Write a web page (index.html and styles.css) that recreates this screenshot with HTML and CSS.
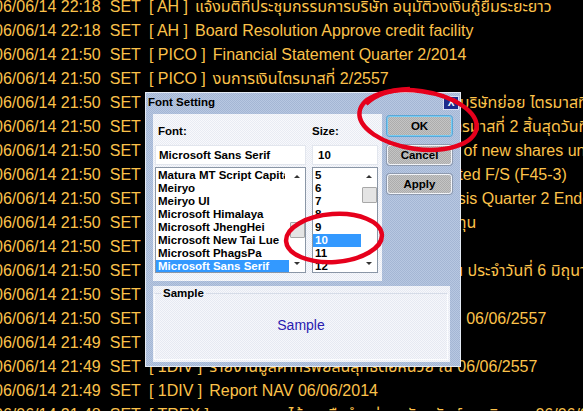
FILE: index.html
```html
<!DOCTYPE html>
<html lang="th">
<head>
  <meta charset="UTF-8">
  <title>Font Setting</title>
  <meta name="viewport" content="width=device-width, initial-scale=1.0">
  <link rel="stylesheet" href="styles.css">
</head>
<body>
<div class="news">
  <div class="row"><span class="dt">06/06/14 22:18</span><span class="ex">SET</span><span class="sym">[ AH ]</span><span class="ttl">แจ้งมติที่ประชุมกรรมการบริษัท อนุมัติวงเงินกู้ยืมระยะยาว</span></div>
  <div class="row"><span class="dt">06/06/14 22:18</span><span class="ex">SET</span><span class="sym">[ AH ]</span><span class="ttl">Board Resolution Approve credit facility</span></div>
  <div class="row"><span class="dt">06/06/14 21:50</span><span class="ex">SET</span><span class="sym">[ PICO ]</span><span class="ttl">Financial Statement Quarter 2/2014</span></div>
  <div class="row"><span class="dt">06/06/14 21:50</span><span class="ex">SET</span><span class="sym">[ PICO ]</span><span class="ttl">งบการเงินไตรมาสที่ 2/2557</span></div>
  <div class="row"><span class="dt">06/06/14 21:50</span><span class="ex">SET</span><span class="sym">[ PICO ]</span><span class="ttl">สรุปผลการดำเนินงานรวมของ บจ. และ บริษัทย่อย ไตรมาสที่ 2 (F45-3)</span></div>
  <div class="row"><span class="dt">06/06/14 21:50</span><span class="ex">SET</span><span class="sym">[ PICO ]</span><span class="ttl">คำอธิบายและวิเคราะห์ของฝ่ายจัดการ ไตรมาสที่ 2 สิ้นสุดวันที่ 30 เม.ย. 2557</span></div>
  <div class="row"><span class="dt">06/06/14 21:50</span><span class="ex">SET</span><span class="sym">[ PICO ]</span><span class="ttl">Report the Results of the allotment of new shares under General Mandate</span></div>
  <div class="row"><span class="dt">06/06/14 21:50</span><span class="ex">SET</span><span class="sym">[ PICO ]</span><span class="ttl">Reviewed quarter 2 and Consolidated F/S (F45-3)</span></div>
  <div class="row"><span class="dt">06/06/14 21:50</span><span class="ex">SET</span><span class="sym">[ PICO ]</span><span class="ttl">Management's Discussion &amp; Analysis Quarter 2 Ended 30 Apr 2014</span></div>
  <div class="row"><span class="dt">06/06/14 21:50</span><span class="ex">SET</span><span class="sym">[ PICO ]</span><span class="ttl">รายงานผลการเสนอขายหุ้นสามัญที่เพิ่มทุน</span></div>
  <div class="row"><span class="dt">06/06/14 21:50</span><span class="ex">SET</span><span class="sym">[ M-II ]</span><span class="ttl">Report NAV 06/06/2014</span></div>
  <div class="row"><span class="dt">06/06/14 21:50</span><span class="ex">SET</span><span class="sym">[ M-II ]</span><span class="ttl">รายงานมูลค่าทรัพย์สินสุทธิต่อหน่วยลงทุน ประจำวันที่ 6 มิถุนายน 2557</span></div>
  <div class="row"><span class="dt">06/06/14 21:50</span><span class="ex">SET</span><span class="sym">[ QHPF ]</span><span class="ttl">Report NAV 06/06/2014</span></div>
  <div class="row"><span class="dt">06/06/14 21:50</span><span class="ex">SET</span><span class="sym">[ QHPF ]</span><span class="ttl">รายงานมูลค่าทรัพย์สินสุทธิต่อหน่วย ณ 06/06/2557</span></div>
  <div class="row"><span class="dt">06/06/14 21:49</span><span class="ex">SET</span><span class="sym">[ TNPF ]</span><span class="ttl">Report NAV 06/06/2014</span></div>
  <div class="row"><span class="dt">06/06/14 21:49</span><span class="ex">SET</span><span class="sym">[ 1DIV ]</span><span class="ttl">รายงานมูลค่าทรัพย์สินสุทธิต่อหน่วย ณ 06/06/2557</span></div>
  <div class="row"><span class="dt">06/06/14 21:49</span><span class="ex">SET</span><span class="sym">[ 1DIV ]</span><span class="ttl">Report NAV 06/06/2014</span></div>
  <div class="row"><span class="dt">06/06/14 21:48</span><span class="ex">SET</span><span class="sym">[ TREX ]</span><span class="ttl">รายงานการได้มาหรือจำหน่ายหลักทรัพย์ของกิจการ 06/06/2557</span></div>
</div>

<div class="dialog">
  <div class="titlebar">
    <span class="title">Font Setting</span>
    <span class="close">X</span>
  </div>
  <div class="dlg-body">
    <div class="panel">
      <div class="col col-font">
        <div class="label">Font:</div>
        <div class="field">Microsoft Sans Serif</div>
        <div class="list">
          <ul class="items">
            <li>Matura MT Script Capitals</li>
            <li>Meiryo</li>
            <li>Meiryo UI</li>
            <li>Microsoft Himalaya</li>
            <li>Microsoft JhengHei</li>
            <li>Microsoft New Tai Lue</li>
            <li>Microsoft PhagsPa</li>
            <li class="sel">Microsoft Sans Serif</li>
          </ul>
          <div class="scroll">
            <span class="arr up"></span>
            <span class="thumb thumb-font"></span>
            <span class="arr down"></span>
          </div>
        </div>
      </div>
      <div class="col col-size">
        <div class="label">Size:</div>
        <div class="field">10</div>
        <div class="list">
          <ul class="items">
            <li>5</li>
            <li>6</li>
            <li>7</li>
            <li>8</li>
            <li>9</li>
            <li class="sel">10</li>
            <li>11</li>
            <li>12</li>
          </ul>
          <div class="scroll">
            <span class="arr up"></span>
            <span class="thumb thumb-size"></span>
            <span class="arr down"></span>
          </div>
        </div>
      </div>
    </div>
    <div class="buttons">
      <button class="btn btn-default">OK</button>
      <button class="btn">Cancel</button>
      <button class="btn">Apply</button>
    </div>
  </div>
  <div class="sample">
    <fieldset>
      <legend>Sample</legend>
      <div class="preview">Sample</div>
    </fieldset>
  </div>
</div>

<svg class="marks" width="583" height="411" viewBox="0 0 583 411">
  <ellipse cx="418" cy="120" rx="59" ry="29" transform="rotate(8 418 120)"/>
  <path d="M366 104 Q380 90 410 89"/>
  <ellipse cx="334" cy="238" rx="48" ry="24" transform="rotate(-4 334 238)"/>
</svg>
</body>
</html>
```

FILE: styles.css
```css
body {
  margin: 0;
  width: 583px;
  height: 411px;
  overflow: hidden;
  position: relative;
  background: #000;
}

/* news list behind the dialog */
.news {
  margin: -5px 0 0 -6px;
  color: #fcc24a;
  font-family: 'Liberation Sans', 'Noto Sans Thai', 'Noto Sans', 'DejaVu Sans', sans-serif;
  font-size: 16px;
}
.row {
  height: 24px;
  line-height: 24px;
  white-space: pre;
  overflow: hidden;
}
.dt { margin-right: 9px; }
.ex { margin-right: 8px; }
.sym { margin-right: 7px; }

/* dialog */
.dialog {
  position: absolute;
  left: 145px;
  top: 92px;
  width: 316px;
  height: 275px;
  box-sizing: border-box;
  border: 1px solid #e4eaf4;
  background: repeating-conic-gradient(#a4b6d4 0 25%, #b8c8e2 0 50%) 0 0 / 2px 2px;
  font-family: 'Liberation Sans', Arial, sans-serif;
  font-size: 11.5px;
  font-weight: bold;
  color: #000;
}
.titlebar {
  height: 17px;
  display: flex;
  align-items: center;
  justify-content: space-between;
  padding: 0 1px 0 2px;
}
.close {
  width: 14px;
  height: 12px;
  margin-top: 2px;
  background: #1c2c8c;
  border: 1px solid #d8e2f4;
  color: #fff;
  font-size: 10px;
  line-height: 12px;
  text-align: center;
}
.dlg-body {
  display: flex;
  margin-top: 4px;
  padding-left: 7px;
}
.panel {
  width: 229px;
  height: 167px;
  box-sizing: border-box;
  display: flex;
  gap: 6px;
  padding: 10px 4px 0 2px;
  background: repeating-conic-gradient(#e8ebf3 0 25%, #f8f9fc 0 50%) 0 0 / 2px 2px;
}
.col { display: flex; flex-direction: column; }
.col-font { width: 151px; }
.col-size { width: 66px; }
.label {
  height: 14px;
  line-height: 14px;
  margin-bottom: 7px;
}
.col-font .label { padding-left: 3px; }
.field {
  height: 20px;
  box-sizing: border-box;
  line-height: 19px;
  padding-left: 3px;
  background: #fff;
  border: 1px solid #e2e6ee;
}
.col-size .field { padding-left: 5px; }
.list {
  height: 106px;
  margin-top: 2px;
  box-sizing: border-box;
  display: flex;
  background: #fff;
  border: 1px solid #8a96a6;
  overflow: hidden;
}
.items {
  flex: 1;
  margin: 0;
  padding: 1px 0 0;
  list-style: none;
  overflow: hidden;
}
.items li {
  height: 13px;
  line-height: 13px;
  padding: 0 4px 0 2px;
  white-space: nowrap;
  overflow: clip;
  overflow-clip-margin: content-box;
}
.items li.sel {
  background: #3399ff;
  color: #fff;
}
.scroll {
  width: 16px;
  display: flex;
  flex-direction: column;
  align-items: center;
}
.arr {
  width: 0;
  height: 0;
  border-left: 3px solid transparent;
  border-right: 3px solid transparent;
}
.arr.up { margin-top: 7px; border-bottom: 3px solid #333; }
.arr.down { margin-top: auto; margin-bottom: 7px; border-top: 3px solid #333; }
.thumb {
  width: 13px;
  height: 14px;
  background: #e4e4e4;
  border: 1px solid #a8a8a8;
  border-radius: 1px;
}
.thumb-font { margin-top: 44px; }
.thumb-size { margin-top: 9px; }

.buttons {
  display: flex;
  flex-direction: column;
  gap: 9px;
  margin: 2px 0 0 5px;
}
.btn {
  width: 65px;
  height: 20px;
  padding: 0;
  border: 1px solid #f2f4f8;
  border-radius: 3px;
  box-shadow: 0 0 0 1px #8e9aae;
  background: repeating-conic-gradient(#acacac 0 25%, #c4c4c4 0 50%) 0 0 / 2px 2px;
  font: bold 11.5px 'Liberation Sans', Arial, sans-serif;
  color: #000;
}
.btn-default {
  border-color: #78ccf2;
  box-shadow: 0 0 0 1px #5aa8d8;
}

.sample {
  width: 297px;
  height: 76px;
  box-sizing: border-box;
  margin: 5px 0 0 7px;
  padding: 0 2px 2px 1px;
  background: repeating-conic-gradient(#e6e9f2 0 25%, #f6f7fb 0 50%) 0 0 / 2px 2px;
}
fieldset {
  height: 100%;
  box-sizing: border-box;
  margin: 0;
  padding: 0;
  border: 1px solid #fbfcfe;
  border-top-color: #d6dce8;
}
legend {
  margin-left: 6px;
  padding: 0 2px;
  line-height: 14px;
}
.preview {
  height: 100%;
  display: flex;
  align-items: center;
  justify-content: center;
  padding-bottom: 10px;
  box-sizing: border-box;
  font: 14px 'Liberation Sans', Arial, sans-serif;
  color: #2a1cb0;
}

/* red annotation rings */
.marks {
  position: absolute;
  left: 0;
  top: 0;
  pointer-events: none;
}
.marks ellipse, .marks path {
  fill: none;
  stroke: #e6001c;
  stroke-width: 4.5;
}
```
